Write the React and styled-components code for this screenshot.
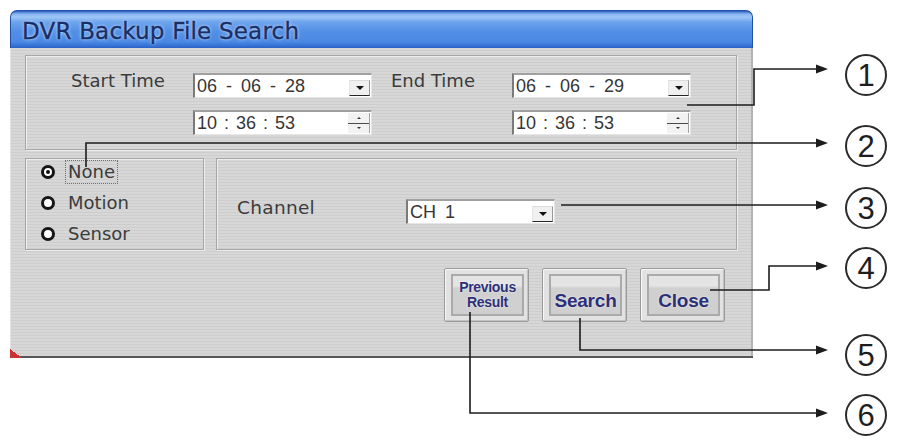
import React from 'react';
import styled, { createGlobalStyle } from 'styled-components';

const GlobalStyle = createGlobalStyle`
  html, body {
    margin: 0;
    padding: 0;
    background: #ffffff;
  }
  body {
    font-family: "DejaVu Sans", "Liberation Sans", sans-serif;
  }
`;

const leaders = [
  { n: 1, y: 75, points: [[687, 105], [754, 105], [754, 69], [818, 69]] },
  { n: 2, y: 146, points: [[86, 167], [86, 143], [818, 143]] },
  { n: 3, y: 208, points: [[561, 205], [818, 205]] },
  { n: 4, y: 268, points: [[710, 290], [769, 290], [769, 266], [818, 266]] },
  { n: 5, y: 355, points: [[580, 318], [580, 350], [818, 350]] },
  { n: 6, y: 415, points: [[470, 312], [470, 413], [818, 413]] },
];

export default function App() {
  return (
    <Stage>
      <GlobalStyle />
      <Window>
        <TitleBar>DVR Backup File Search</TitleBar>
        <Body>
          <TimeGroup>
            <Label>Start Time</Label>
            <Field>
              <FieldText>06 - 06 - 28</FieldText>
              <DropButton />
            </Field>
            <Label $indent>End Time</Label>
            <Field>
              <FieldText>06 - 06 - 29</FieldText>
              <DropButton />
            </Field>
            <Field $col={2}>
              <FieldText $tight>10 : 36 : 53</FieldText>
              <Spinner>
                <SpinHalf $up />
                <SpinHalf />
              </Spinner>
            </Field>
            <Field $col={4}>
              <FieldText $tight>10 : 36 : 53</FieldText>
              <Spinner>
                <SpinHalf $up />
                <SpinHalf />
              </Spinner>
            </Field>
          </TimeGroup>

          <FilterRow>
            <RadioGroup>
              <RadioItem>
                <RadioDot $checked />
                <RadioText $focused>None</RadioText>
              </RadioItem>
              <RadioItem>
                <RadioDot />
                <RadioText>Motion</RadioText>
              </RadioItem>
              <RadioItem>
                <RadioDot />
                <RadioText>Sensor</RadioText>
              </RadioItem>
            </RadioGroup>
            <ChannelGroup>
              <ChannelLabel>Channel</ChannelLabel>
              <Field $w={149}>
                <FieldText>CH 1</FieldText>
                <DropButton />
              </Field>
            </ChannelGroup>
          </FilterRow>

          <ButtonBar>
            <ActionButton type='button'>
              <ButtonFace $small>
                <span>Previous</span>
                <span>Result</span>
              </ButtonFace>
            </ActionButton>
            <ActionButton type='button'>
              <ButtonFace>Search</ButtonFace>
            </ActionButton>
            <ActionButton type='button'>
              <ButtonFace>Close</ButtonFace>
            </ActionButton>
          </ButtonBar>
        </Body>
      </Window>

      <Overlay width='898' height='442' viewBox='0 0 898 442'>
        {leaders.map((l) => {
          const [tx, ty] = l.points[l.points.length - 1];
          return (
            <g key={l.n}>
              <polyline
                points={l.points.map((p) => p.join(',')).join(' ')}
                fill='none'
                stroke='#1c1c1c'
                strokeWidth='1.6'
              />
              <polygon
                points={`${tx - 2},${ty - 4.5} ${tx + 10},${ty} ${tx - 2},${ty + 4.5}`}
                fill='#1c1c1c'
              />
            </g>
          );
        })}
      </Overlay>
      {leaders.map((l) => (
        <Callout key={l.n} $y={l.y}>
          {l.n}
        </Callout>
      ))}
    </Stage>
  );
}

const Stage = styled.div`
  position: relative;
  width: 898px;
  height: 442px;
  padding: 10px 0 0 10px;
  box-sizing: border-box;
  overflow: hidden;
  background: #fff;
`;

const Window = styled.div`
  position: relative;
  width: 743px;
  height: 348px;
  box-sizing: border-box;
  display: flex;
  flex-direction: column;
  border-bottom: 2px solid #585858;

  /* little red mark on the bottom-left corner */
  &::after {
    content: '';
    position: absolute;
    left: 0;
    bottom: -2px;
    width: 12px;
    height: 9px;
    background: linear-gradient(to top right, #c83434 50%, transparent 50%);
  }
`;

const TitleBar = styled.div`
  height: 38px;
  box-sizing: border-box;
  display: flex;
  align-items: center;
  padding: 2px 0 0 11px;
  border: 1px solid #2150a8;
  border-bottom: 0;
  border-radius: 7px 7px 0 0;
  background: linear-gradient(
    to bottom,
    #2c5cbc 0,
    #86b4f2 3px,
    #9fc6f7 6px,
    #6ea4ec 11px,
    #528fe6 20px,
    #4a88e3 31px,
    #3570d4 35px,
    #2b60c2 37px
  );
  font-family: "DejaVu Sans", sans-serif;
  font-size: 23px;
  letter-spacing: 0.2px;
  color: #172f68;
  -webkit-text-stroke: 0.4px #172f68;
  text-shadow: 0 0 2px #d4e6ff, 0 0 4px #a9cbfb;
`;

const Body = styled.div`
  flex: 1;
  display: flex;
  flex-direction: column;
  padding: 7px 14px 0 14px;
  border-left: 1px solid #e4e4e4;
  border-right: 2px solid #b3b3b3;
  background: repeating-linear-gradient(
    to bottom,
    #d7d7d7 0,
    #d7d7d7 2px,
    #cdcdcd 2px,
    #cdcdcd 3px
  );
`;

const GroupBox = styled.div`
  box-sizing: border-box;
  border: 1px solid #a6a6a6;
  box-shadow: inset 1px 1px 0 #ededed, 1px 1px 0 #ededed;
`;

const TimeGroup = styled(GroupBox)`
  height: 95px;
  padding: 17px 0 0 45px;
  display: grid;
  grid-template-columns: 122px 179px 140px 179px;
  grid-template-rows: 25px 25px;
  row-gap: 12px;
  align-content: start;
`;

const Label = styled.span`
  align-self: start;
  margin-top: 1px;
  padding-left: ${(p) => (p.$indent ? '19px' : '0')};
  font-size: 18px;
  line-height: 14px;
  color: #3b3b3b;
  white-space: nowrap;
`;

const Field = styled.div`
  box-sizing: border-box;
  grid-column: ${(p) => p.$col || 'auto'};
  width: ${(p) => p.$w || 179}px;
  height: 25px;
  display: flex;
  align-items: center;
  padding-left: 2px;
  background: #fff;
  border-style: solid;
  border-width: 2px 1px 1px 2px;
  border-color: #a0a0a0 #e6e6e6 #e6e6e6 #7a7a7a;
`;

const FieldText = styled.span`
  flex: 1;
  font-family: "Liberation Sans", Arial, sans-serif;
  font-size: 18px;
  line-height: 20px;
  color: #363636;
  white-space: pre;
  word-spacing: ${(p) => (p.$tight ? '2px' : '4px')};
`;

const DropButton = styled.span`
  align-self: flex-end;
  flex: none;
  width: 21px;
  height: 16px;
  margin: 0 1px 1px 0;
  box-sizing: border-box;
  display: flex;
  align-items: center;
  justify-content: center;
  background: #f0f0f0;
  border-top: 1px solid #dadada;
  border-left: 1px solid #e6e6e6;
  border-right: 1px solid #979797;
  border-bottom: 1px solid #262626;

  &::before {
    content: '';
    border-left: 4px solid transparent;
    border-right: 4px solid transparent;
    border-top: 4px solid #111;
  }
`;

const Spinner = styled.span`
  align-self: stretch;
  flex: none;
  width: 21px;
  margin: 1px 1px 1px 0;
  display: flex;
  flex-direction: column;
  border-right: 1px solid #a3a3a3;
`;

const SpinHalf = styled.span`
  flex: 1;
  display: flex;
  align-items: center;
  justify-content: center;
  background: #f2f2f2;
  border-bottom: ${(p) => (p.$up ? '1px solid #4c4c4c' : '0')};

  &::before {
    content: '';
    border-left: 2px solid transparent;
    border-right: 2px solid transparent;
    ${(p) => (p.$up ? 'border-bottom: 2px solid #333;' : 'border-top: 2px solid #333;')}
  }
`;

const FilterRow = styled.div`
  margin-top: 8px;
  height: 92px;
  display: grid;
  grid-template-columns: 179px 1fr;
  column-gap: 12px;
`;

const RadioGroup = styled(GroupBox)`
  display: flex;
  flex-direction: column;
  gap: 7px;
  padding: 1px 0 0 15px;
`;

const RadioItem = styled.div`
  height: 24px;
  display: flex;
  align-items: center;
  gap: 10px;
`;

const RadioDot = styled.span`
  flex: none;
  width: 14px;
  height: 14px;
  box-sizing: border-box;
  border: 3px solid #151515;
  border-radius: 50%;
  background: #fff;
  display: flex;
  align-items: center;
  justify-content: center;

  &::before {
    content: '';
    width: 4px;
    height: 4px;
    border-radius: 50%;
    background: ${(p) => (p.$checked ? '#111' : 'transparent')};
  }
`;

const RadioText = styled.span`
  padding: 1px 2px;
  border: 1px dotted ${(p) => (p.$focused ? '#6e6e6e' : 'transparent')};
  font-size: 18px;
  line-height: 20px;
  color: #3b3b3b;
`;

const ChannelGroup = styled(GroupBox)`
  display: flex;
  align-items: flex-start;
  padding: 40px 0 0 20px;
`;

const ChannelLabel = styled.span`
  width: 169px;
  margin-top: 2px;
  font-size: 18.5px;
  line-height: 14px;
  letter-spacing: 0.3px;
  color: #3b3b3b;
`;

const ButtonBar = styled.div`
  margin-top: 18px;
  padding-right: 12px;
  display: flex;
  justify-content: flex-end;
  gap: 13px;
`;

const ActionButton = styled.button`
  width: 85px;
  height: 54px;
  box-sizing: border-box;
  padding: 5px 4px 5px 6px;
  display: flex;
  border: 1px solid #9a9a9a;
  border-radius: 2px;
  background: #e2e2e2;
  box-shadow: inset 1px 1px 0 #f7f7f7, inset -1px -1px 0 #c2c2c2;
  cursor: pointer;
`;

const ButtonFace = styled.span`
  flex: 1;
  display: flex;
  flex-direction: column;
  align-items: center;
  justify-content: center;
  padding-top: ${(p) => (p.$small ? '0' : '12px')};
  border: 2px solid #aaaaaa;
  background: linear-gradient(to bottom, #e4e4e4 0, #e4e4e4 10px, #d0d0d0 12px, #cfcfcf 100%);
  font-family: "Liberation Sans", Arial, sans-serif;
  font-weight: bold;
  font-size: ${(p) => (p.$small ? '14px' : '19px')};
  line-height: ${(p) => (p.$small ? '15px' : '20px')};
  letter-spacing: ${(p) => (p.$small ? '-0.3px' : '-0.2px')};
  color: #2c2f78;
  text-shadow: 0 0 2px rgba(255, 255, 255, 0.85);
`;

const Overlay = styled.svg`
  position: absolute;
  left: 0;
  top: 0;
  pointer-events: none;
`;

const Callout = styled.span`
  position: absolute;
  left: 845px;
  top: ${(p) => p.$y - 21}px;
  width: 42px;
  height: 42px;
  box-sizing: border-box;
  border: 2px solid #2b2b2b;
  border-radius: 50%;
  display: flex;
  align-items: center;
  justify-content: center;
  font-family: "Liberation Sans", Arial, sans-serif;
  font-size: 31px;
  line-height: 1;
  color: #1e1e1e;
`;
